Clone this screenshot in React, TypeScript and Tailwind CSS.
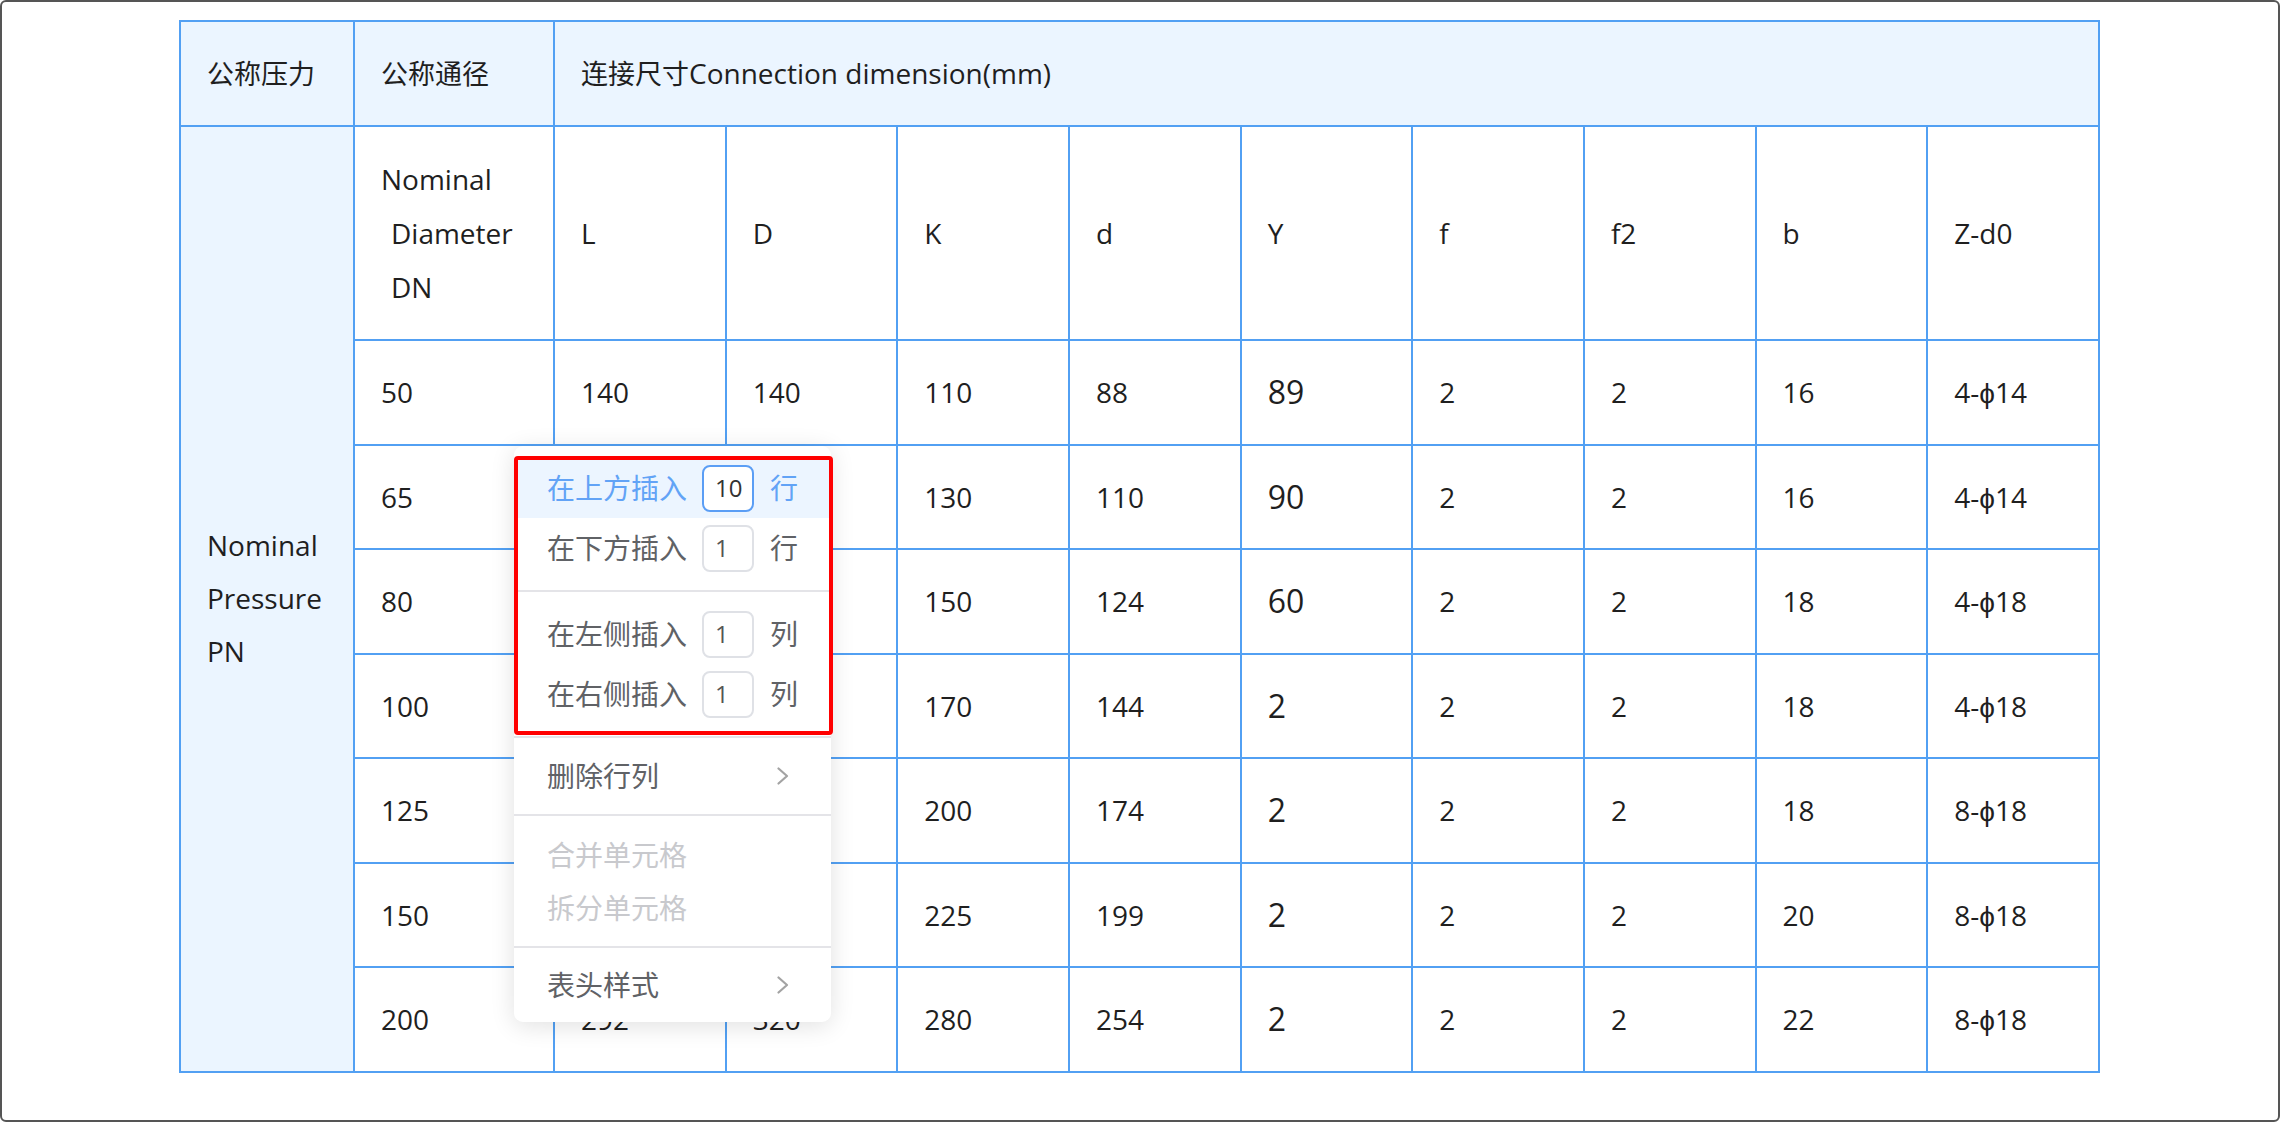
import { Fragment } from "react";

const FONT = { fontFamily: "'Open Sans', 'Noto Sans CJK SC', sans-serif" };

const columns = ["L", "D", "K", "d", "Y", "f", "f2", "b", "Z-d0"];

const rows: string[][] = [
  ["50", "140", "140", "110", "88", "89", "2", "2", "16", "4-ϕ14"],
  ["65", "160", "160", "130", "110", "90", "2", "2", "16", "4-ϕ14"],
  ["80", "185", "190", "150", "124", "60", "2", "2", "18", "4-ϕ18"],
  ["100", "210", "210", "170", "144", "2", "2", "2", "18", "4-ϕ18"],
  ["125", "240", "240", "200", "174", "2", "2", "2", "18", "8-ϕ18"],
  ["150", "265", "265", "225", "199", "2", "2", "2", "20", "8-ϕ18"],
  ["200", "292", "320", "280", "254", "2", "2", "2", "22", "8-ϕ18"],
];

const cell = "border-2 border-[#52a0f3] pl-[26px] pr-2 text-left align-middle font-medium";
const cjk = "text-[27px] font-normal";

function Chevron() {
  return (
    <svg width="12" height="18" viewBox="0 0 12 18" fill="none" className="shrink-0">
      <polyline points="1.5,1.5 10,9 1.5,16.5" stroke="#a3a3a3" strokeWidth="2.2" strokeLinecap="round" strokeLinejoin="round" />
    </svg>
  );
}

function InsertRow({ label, value, unit, active }: { label: string; value: string; unit: string; active?: boolean }) {
  return (
    <div className={`flex h-[60px] items-center whitespace-nowrap pl-[33px] ${active ? "bg-[#ecf5ff] text-[#62a3f6]" : "text-[#606266]"}`}>
      <span className="w-[140px] shrink-0">{label}</span>
      <div
        className={`ml-[15px] flex h-[47px] w-[52px] shrink-0 items-center rounded-[8px] border-2 bg-white pl-[11px] text-[24px] ${
          active ? "border-[#5b9ef5] text-[#333]" : "border-[#dfe1e6] text-[#555]"
        }`}
      >
        {value}
      </div>
      <span className="ml-[16px]">{unit}</span>
    </div>
  );
}

function Divider() {
  return <div className="h-[2px] bg-[#e4e4e8]" />;
}

function ContextMenu() {
  return (
    <div className="absolute left-[512px] top-[444px] w-[317px] rounded-[9px] bg-white text-[28px] shadow-[0_4px_24px_rgba(0,0,0,0.12)]">
      <div className="py-[12px]">
        <InsertRow label="在上方插入" value="10" unit="行" active />
        <InsertRow label="在下方插入" value="1" unit="行" />
      </div>
      <Divider />
      <div className="py-[12px]">
        <InsertRow label="在左侧插入" value="1" unit="列" />
        <InsertRow label="在右侧插入" value="1" unit="列" />
      </div>
      <Divider />
      <div className="py-[8px]">
        <div className="flex h-[60px] items-center justify-between pl-[33px] pr-[42px] text-[#606266]">
          <span>删除行列</span>
          <Chevron />
        </div>
      </div>
      <Divider />
      <div className="py-[12px] text-[#c8c9cd]">
        <div className="flex h-[53px] items-center pl-[33px]">合并单元格</div>
        <div className="flex h-[53px] items-center pl-[33px]">拆分单元格</div>
      </div>
      <Divider />
      <div className="py-[7px]">
        <div className="flex h-[60px] items-center justify-between pl-[33px] pr-[42px] text-[#606266]">
          <span>表头样式</span>
          <Chevron />
        </div>
      </div>
      {/* annotation box */}
      <div className="pointer-events-none absolute left-0 top-[10px] h-[279px] w-[319px] rounded-[4px] border-4 border-[#ff0000]" />
    </div>
  );
}

export default function App() {
  return (
    <div className="relative h-[1122px] w-[2280px] overflow-hidden rounded-[6px] border-2 border-[#555] bg-white" style={FONT}>
      <table className="ml-[177px] mt-[18px] w-[1921px] table-fixed border-collapse text-[28px] text-[#1f1f1f]">
        <colgroup>
          <col className="w-[174px]" />
          <col className="w-[200px]" />
          {columns.map((c) => (
            <col key={c} />
          ))}
        </colgroup>
        <tbody>
          <tr className="h-[105px] bg-[#ebf5ff]">
            <td className={cell}>
              <span className={cjk}>公称压力</span>
            </td>
            <td className={cell}>
              <span className={cjk}>公称通径</span>
            </td>
            <td className={cell} colSpan={9}>
              <span className={cjk}>连接尺寸</span>Connection dimension(mm)
            </td>
          </tr>
          <tr className="h-[214px]">
            <td className={`${cell} bg-[#ebf5ff] leading-[53px]`} rowSpan={8}>
              Nominal
              <br />
              Pressure
              <br />
              PN
            </td>
            <td className={`${cell} leading-[54px]`}>
              Nominal
              <br />
              <span className="pl-[10px]">Diameter</span>
              <br />
              <span className="pl-[10px]">DN</span>
            </td>
            {columns.map((c) => (
              <td key={c} className={cell}>
                {c}
              </td>
            ))}
          </tr>
          {rows.map((r) => (
            <tr key={r[0]} className="h-[104.5px]">
              {r.map((v, i) => (
                <Fragment key={i}>
                  <td className={`${cell} ${i === 5 ? "text-[32px]" : ""}`}>{v}</td>
                </Fragment>
              ))}
            </tr>
          ))}
        </tbody>
      </table>
      <ContextMenu />
    </div>
  );
}
